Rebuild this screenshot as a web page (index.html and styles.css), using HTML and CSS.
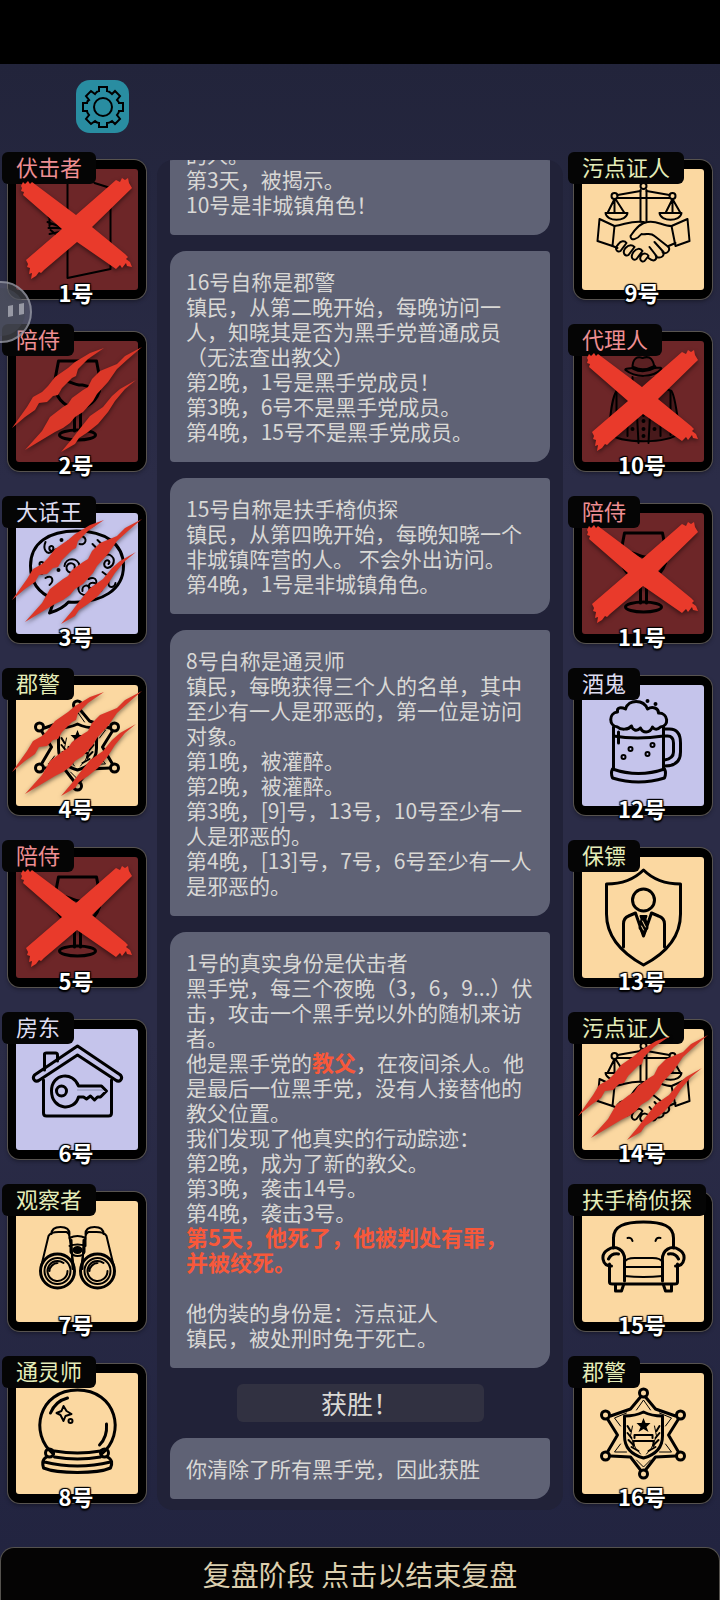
FILE: index.html
```html
<!DOCTYPE html>
<html lang="zh-CN">
<head>
    <meta charset="UTF-8">
    <meta name="viewport" content="width=device-width, initial-scale=1.0">
    <title>复盘阶段</title>
    <link rel="stylesheet" href="styles.css">
</head>
<body>
    <!-- shared role icons and status marks -->
    <svg class="sprites" width="0" height="0" aria-hidden="true">
        <defs>
            <g id="ambusher">
                <path d="M59 20V118L102 109V28L86 23"/>
                <path d="M40 57L52 61M39 62L50 66M40 68H54M41 74L51 72M41 57V66M42 70L52 78"/>
            </g>
            <g id="glass" stroke-width="3">
                <path d="M50 29H88L92 50C92 66 83 74 69 78C55 74 46 66 46 50Z"/>
                <path d="M48 48C57 45 64 54 74 53C81 54 86 58 91 59"/>
                <path d="M66 78V99M72 78V99"/>
                <ellipse cx="69" cy="103" rx="18" ry="5"/>
            </g>
            <g id="talk">
                <path stroke-width="3" d="M45 95C30 89 22 78 22 62C22 39 40 27 68 27C97 27 115 40 115 62C115 85 94 100 60 98C54 105 47 107 41 109C43 104 45 101 45 95Z"/>
                <path d="M37 38C34 45 38 51 43 48C47 44 44 40 41 43C40 47 44 49 48 45M56 62C57 53 70 53 71 62C71 71 57 71 58 63C60 57 68 59 66 64M70 81C68 92 80 94 81 86C81 79 73 81 74 87M80 75C88 71 91 80 84 84C78 85 80 77 86 79M94 53C101 47 108 54 104 61C99 67 93 62 97 57C100 55 102 58 100 60M73 32C80 34 77 42 71 40M37 74C44 70 46 77 41 81M100 78C99 85 106 84 107 79M60 37L64 42M84 40L87 43M94 68L98 71M45 86L49 85M89 36L93 40"/>
                <circle cx="33" cy="60" r="2"/><circle cx="53" cy="36" r="1"/><circle cx="50" cy="66" r="1"/><circle cx="84" cy="56" r="1"/><circle cx="61" cy="80" r="1"/><circle cx="92" cy="86" r="1"/><circle cx="33" cy="69" r="1"/>
            </g>
            <g id="sheriff">
                <path stroke-width="3" d="M71 33L81 45L101 52M104 55L94 71L104 88M101 92L81 93L71 106M66 106L56 93L36 92M33 88L43 71L33 55M36 52L56 45L66 33"/>
                <path stroke-width="1" d="M62 46L69 36L76 46M85 49L97 54L91 62M91 80L97 88L85 88M76 96L69 103L62 96M52 88L40 88L46 80M46 62L40 54L52 49"/>
                <g stroke-width="3">
                    <circle cx="69" cy="29" r="4"/><circle cx="106" cy="51" r="4"/><circle cx="106" cy="92" r="4"/><circle cx="69" cy="110" r="4"/><circle cx="31" cy="92" r="4"/><circle cx="31" cy="51" r="4"/>
                </g>
                <path stroke-width="3" d="M50 52Q61 52 69 48Q77 52 88 52V72C88 84 80 91 69 94C58 91 50 84 50 72Z"/>
                <path fill="#000" stroke="none" d="M69 54L71 59H76L72 63L74 68L69 65L64 68L66 63L62 59H67Z"/>
                <path d="M60 74V71H78V74M59 82V77H79V82"/>
                <path d="M53 62L56 67M53 69L57 74M54 76L59 81M57 83L64 87M85 62L82 67M85 69L81 74M84 76L79 81M81 83L74 87"/>
                <path stroke-width="1" d="M58 62L56 72L61 84L66 90M80 62L82 72L77 84L72 90"/>
            </g>
            <g id="house">
                <path stroke-width="3" d="M36 50V34Q36 33 38 33H47Q49 33 49 35V41"/>
                <path stroke-width="3" d="M69 26L112 55C115 59 111 63 107 60L69 35L31 60C27 63 23 59 26 55Z"/>
                <path stroke-width="3" d="M35 60V93Q35 96 38 96H100Q103 96 103 93V60"/>
                <path stroke-width="3" d="M70 66C65 51 43 53 43 71C43 90 66 92 70 77H75L78 79L82 76L86 80L89 77H92L98 71L93 66Z"/>
                <circle cx="53" cy="71" r="5" stroke-width="3"/>
                <path stroke-width="1" stroke="#8b90b4" d="M69 70H94"/>
            </g>
            <g id="binoculars">
                <circle cx="49" cy="79" r="17" stroke-width="3"/><circle cx="49" cy="79" r="13"/><path d="M55 71A10 10 0 1 0 59 79M49 71C45 71 41 75 41 79"/>
                <circle cx="89" cy="79" r="17" stroke-width="3"/><circle cx="89" cy="79" r="13"/><path d="M95 71A10 10 0 1 0 99 79M89 71C85 71 81 75 81 79"/>
                <path d="M33 73L40 44Q42 40 50 40H58Q61 41 61 45L65 73M105 73L98 44Q96 40 88 40H80Q77 41 77 45L73 73"/>
                <path d="M43 42Q43 35 52 35T61 42M77 42Q77 35 86 35T95 42"/>
                <path d="M61 46Q69 42 77 46V54Q69 51 61 54M62 54V60Q64 64 69 64Q75 64 76 60V54M63 48L64 77M75 48L74 77"/>
                <ellipse cx="69" cy="58" rx="4" ry="3" fill="#000"/>
            </g>
            <g id="crystal" stroke-width="3">
                <path d="M45 90C20 70 30 26 69 26C108 26 118 70 93 90"/>
                <path d="M46 87Q69 91 92 87M46 93Q69 97 92 93"/>
                <circle cx="41" cy="89" r="4"/><circle cx="96" cy="89" r="4"/>
                <path d="M38 93C33 96 34 100 35 104C50 110 88 110 102 104C104 99 104 96 99 93M36 98Q69 106 102 98"/>
                <path d="M42 49Q47 37 59 34M98 60Q99 73 91 81"/>
                <path stroke-width="2" d="M55 42L58 47L63 50L57 52L55 57L52 51L48 49L53 47Z"/>
                <circle cx="62" cy="57" r="2" stroke-width="2"/>
            </g>
            <g id="witness">
                <path d="M43 35L66 31M72 31L95 35M43 38H95"/>
                <circle cx="69" cy="26" r="3"/><circle cx="40" cy="36" r="3"/><circle cx="98" cy="36" r="3"/>
                <path d="M66 30V61M72 30V61"/>
                <path d="M40 39L33 53M40 39V53M41 39L50 53M31 53H53C52 62 32 62 31 53ZM98 39L91 53M98 39V53M98 39L106 53M85 53H107C106 62 86 62 85 53Z"/>
                <path d="M25 59L40 66L38 86L23 81ZM113 59L97 66L101 86L115 81Z"/>
                <path d="M40 66C50 65 57 60 69 62M97 66C88 66 82 60 73 62C65 63 60 70 56 76C56 82 63 79 67 74C72 75 76 72 80 76L94 87M101 83L94 86M38 86L43 88"/>
                <path d="M44 84C39 89 43 93 46 91L52 83C50 80 46 81 44 84ZM51 88C47 93 51 97 54 95L60 87C57 84 54 85 51 88ZM59 92C55 98 59 101 62 99L68 91C66 88 62 88 59 92ZM67 95C64 99 67 103 70 101L74 96C73 93 69 93 67 95Z"/>
                <path d="M74 98C80 103 83 99 81 95M82 97C87 99 91 95 88 92M89 93C93 94 96 90 94 87M75 87L82 96M80 82L89 92"/>
            </g>
            <g id="agent">
                <path fill="#5a2022" d="M58 36C58 26 63 24 68 26C76 23 79 28 80 36C84 36 87 35 87 37C78 46 61 46 51 38C50 36 54 37 58 36Z"/>
                <path stroke-width="4" d="M59 36Q69 41 80 35"/>
                <path fill="#48191b" d="M58 45V52Q69 60 80 52V45M55 53L42 59C37 66 36 84 34 101C46 112 92 112 105 101C103 84 101 65 97 59L82 53"/>
                <path d="M42 59V103M96 59V103M61 56L64 111M77 56L74 111M56 54L69 84L82 54M49 85H57M82 85H90M53 91V104M86 91V104"/>
                <circle cx="69" cy="89" r="1"/><circle cx="69" cy="97" r="1"/><circle cx="69" cy="104" r="1"/><circle cx="58" cy="97" r="1"/><circle cx="80" cy="97" r="1"/>
            </g>
            <g id="beer" stroke-width="3">
                <path d="M43 51C34 50 34 37 43 36C42 31 47 31 51 33C54 23 69 23 73 33C78 30 84 32 84 37C94 37 95 50 86 51C83 54 80 54 78 51C75 58 68 57 66 52C62 56 58 54 57 50C54 54 46 54 43 51Z"/>
                <path d="M39 51V93M89 51V93M39 60Q62 64 89 60"/>
                <path d="M38 93Q64 102 90 93M38 93Q36 97 38 102Q64 110 90 102Q92 97 90 93"/>
                <path d="M90 53H95C103 53 106 58 106 67V76C106 86 100 90 90 90M90 60H93C97 60 99 62 99 67V76C99 81 96 83 90 84"/>
                <path d="M44 56V67"/>
                <g stroke-width="2"><circle cx="56" cy="73" r="2"/><circle cx="49" cy="81" r="2"/><circle cx="78" cy="69" r="2"/><circle cx="73" cy="78" r="2"/></g>
                <g fill="#000" stroke-width="2"><circle cx="73" cy="25" r="1"/><circle cx="81" cy="28" r="1"/></g>
            </g>
            <g id="bodyguard" stroke-width="3">
                <path d="M69 22C58 33 46 36 32 36V66C32 90 49 106 69 117C90 106 106 90 106 66V36C92 36 80 33 69 22Z"/>
                <circle cx="69" cy="52" r="11"/>
                <path d="M49 99V76Q49 70 54 68L61 65L69 88L77 65L84 68Q90 70 90 76V99"/>
                <path stroke-width="2" fill="#000" d="M66 68H72L71 71L73 80L69 86L65 80L67 71Z"/>
                <path stroke="#fbd8a1" stroke-width="1" d="M68 73L71 79M67 78L69 82"/>
            </g>
            <g id="armchair" stroke-width="3">
                <path d="M39 56V46C39 34 50 30 69 30S99 34 99 46V56"/>
                <path d="M37 74C27 74 26 62 33 58C41 52 51 58 50 69V89M101 74C111 74 112 62 105 58C97 52 87 58 88 69V89"/>
                <path d="M35 72V90Q35 92 38 92H100Q103 92 103 90V72M34 67Q37 61 44 62M104 67Q101 61 94 62"/>
                <path stroke-width="2" d="M50 70Q52 66 60 66H78Q86 66 88 70M50 75H88M50 84Q69 86 88 84"/>
                <path d="M41 93V99H47L49 93M89 93L91 99H97V93"/>
                <path stroke-width="2" d="M53 46Q57 45 58 49M86 46Q82 45 81 49"/>
            </g>
            <path id="cross" fill="#e93a2b" d="M13 26L15 22L17 24L20 21L22 24L24 22L68 55L108 20L112 22L114 18L117 20L120 18L121 23L124 28L84 67L117 94L120 97L118 99L122 102L124 107L119 106L118 103L114 108L112 105L108 109L69 82L36 110L33 113L31 112L28 116L23 119L24 113L21 114L22 108L19 107L20 104L18 100L54 69L15 35L16 32L13 31L14 28Z"/>
            <path id="claws" fill="#db3728" d="M96 16L82 21L67 30L60 36L47 45L40 54L34 60L25 65L19 75L4 96L17 85L27 78L31 71L39 70L45 64L50 63L54 56L64 46L68 44L70 37L80 27ZM134 15L117 24L109 32L92 39L84 47L80 55L75 58L64 66L60 72L55 75L42 85L34 99L17 118L32 109L47 100L55 96L62 91L67 85L75 80L85 69L89 62L100 50L109 37L120 27ZM128 48L112 57L104 64L95 75L82 84L70 99L64 107L53 120L67 112L71 106L80 100L90 92L100 80L107 69L117 57Z"/>
        </defs>
    </svg>

    <div class="status-bar"></div>
    <header class="header">
        <button class="settings" type="button" aria-label="设置">
            <svg viewBox="0 0 44 44" aria-hidden="true">
                <path d="M18 2H26V6Q28 6 31 9L34 6L39 11L36 15Q38 17 38 18H42V26H38Q38 28 36 30L39 34L34 39L31 36Q28 38 26 38V42H18V38Q16 38 14 36L10 39L5 34L8 30Q6 28 6 26H2V18H6Q6 16 8 15L5 11L10 6L14 9Q16 6 18 6Z"/>
                <circle cx="22" cy="22" r="9"/>
            </svg>
        </button>
    </header>

    <main class="board">
        <section class="players">
            <div class="card mafia">
                <svg class="icon" viewBox="8 9 121 121"><use href="#ambusher"/></svg>
                <span class="role">伏击者</span>
                <svg class="mark" viewBox="0 0 138 139"><use href="#cross"/></svg>
                <span class="number">1号</span>
            </div>
            <div class="card mafia">
                <svg class="icon" viewBox="8 9 121 121"><use href="#glass"/></svg>
                <span class="role">陪侍</span>
                <svg class="mark" viewBox="0 0 138 139"><use href="#claws"/></svg>
                <span class="number">2号</span>
            </div>
            <div class="card outsider">
                <svg class="icon" viewBox="8 9 121 121"><use href="#talk"/></svg>
                <span class="role">大话王</span>
                <svg class="mark" viewBox="0 0 138 139"><use href="#claws"/></svg>
                <span class="number">3号</span>
            </div>
            <div class="card town">
                <svg class="icon" viewBox="8 9 121 121"><use href="#sheriff"/></svg>
                <span class="role">郡警</span>
                <svg class="mark" viewBox="0 0 138 139"><use href="#claws"/></svg>
                <span class="number">4号</span>
            </div>
            <div class="card mafia">
                <svg class="icon" viewBox="8 9 121 121"><use href="#glass"/></svg>
                <span class="role">陪侍</span>
                <svg class="mark" viewBox="0 0 138 139"><use href="#cross"/></svg>
                <span class="number">5号</span>
            </div>
            <div class="card outsider">
                <svg class="icon" viewBox="8 9 121 121"><use href="#house"/></svg>
                <span class="role">房东</span>
                <span class="number">6号</span>
            </div>
            <div class="card town">
                <svg class="icon" viewBox="8 9 121 121"><use href="#binoculars"/></svg>
                <span class="role">观察者</span>
                <span class="number">7号</span>
            </div>
            <div class="card town">
                <svg class="icon" viewBox="8 9 121 121"><use href="#crystal"/></svg>
                <span class="role">通灵师</span>
                <span class="number">8号</span>
            </div>
        </section>

        <section class="log">
            <p class="message">的人。<br>第3天，被揭示。<br>10号是非城镇角色！</p>
            <p class="message">16号自称是郡警<br>镇民，从第二晚开始，每晚访问一人，知晓其是否为黑手党普通成员（无法查出教父）<br>第2晚，1号是黑手党成员！<br>第3晚，6号不是黑手党成员。<br>第4晚，15号不是黑手党成员。</p>
            <p class="message">15号自称是扶手椅侦探<br>镇民，从第四晚开始，每晚知晓一个非城镇阵营的人。 不会外出访问。<br>第4晚，1号是非城镇角色。</p>
            <p class="message">8号自称是通灵师<br>镇民，每晚获得三个人的名单，其中至少有一人是邪恶的，第一位是访问对象。<br>第1晚，被灌醉。<br>第2晚，被灌醉。<br>第3晚，[9]号，13号，10号至少有一人是邪恶的。<br>第4晚，[13]号，7号，6号至少有一人是邪恶的。</p>
            <p class="message">1号的真实身份是伏击者<br>黑手党，每三个夜晚（3，6，9...）伏击，攻击一个黑手党以外的随机来访者。<br>他是黑手党的<strong>教父</strong>，在夜间杀人。他是最后一位黑手党，没有人接替他的教父位置。<br>我们发现了他真实的行动踪迹：<br>第2晚，成为了新的教父。<br>第3晚，袭击14号。<br>第4晚，袭击3号。<br><strong>第5天，他死了，他被判处有罪，<br>并被绞死。</strong><br><br>他伪装的身份是：污点证人<br>镇民，被处刑时免于死亡。</p>
            <h2 class="result">获胜！</h2>
            <p class="message">你清除了所有黑手党，因此获胜</p>
        </section>

        <section class="players">
            <div class="card town">
                <svg class="icon" viewBox="8 9 121 121"><use href="#witness"/></svg>
                <span class="role">污点证人</span>
                <span class="number">9号</span>
            </div>
            <div class="card mafia">
                <svg class="icon" viewBox="8 9 121 121"><use href="#agent"/></svg>
                <span class="role">代理人</span>
                <svg class="mark" viewBox="0 0 138 139"><use href="#cross"/></svg>
                <span class="number">10号</span>
            </div>
            <div class="card mafia">
                <svg class="icon" viewBox="8 9 121 121"><use href="#glass"/></svg>
                <span class="role">陪侍</span>
                <svg class="mark" viewBox="0 0 138 139"><use href="#cross"/></svg>
                <span class="number">11号</span>
            </div>
            <div class="card outsider">
                <svg class="icon" viewBox="8 9 121 121"><use href="#beer"/></svg>
                <span class="role">酒鬼</span>
                <span class="number">12号</span>
            </div>
            <div class="card town">
                <svg class="icon" viewBox="8 9 121 121"><use href="#bodyguard"/></svg>
                <span class="role">保镖</span>
                <span class="number">13号</span>
            </div>
            <div class="card town">
                <svg class="icon" viewBox="8 9 121 121"><use href="#witness"/></svg>
                <span class="role">污点证人</span>
                <svg class="mark" viewBox="0 0 138 139"><use href="#claws"/></svg>
                <span class="number">14号</span>
            </div>
            <div class="card town">
                <svg class="icon" viewBox="8 9 121 121"><use href="#armchair"/></svg>
                <span class="role">扶手椅侦探</span>
                <span class="number">15号</span>
            </div>
            <div class="card town">
                <svg class="icon" viewBox="8 9 121 121"><use href="#sheriff"/></svg>
                <span class="role">郡警</span>
                <span class="number">16号</span>
            </div>
        </section>
    </main>

    <button class="end-review" type="button">复盘阶段 点击以结束复盘</button>

    <button class="assist" type="button" aria-label="悬浮球">
        <svg viewBox="0 0 62 62" aria-hidden="true">
            <circle cx="31" cy="31" r="30" fill="#8b8d9b" fill-opacity="0.45" stroke="#9a9ca8" stroke-width="2"/>
            <circle cx="31" cy="31" r="24" fill="#50535f" fill-opacity="0.8"/>
            <path d="M38 25L43 24V35L38 36ZM49 23L54 22V33L49 34Z" fill="#b4b6bd"/>
        </svg>
    </button>
</body>
</html>
```

FILE: styles.css
```css
* {
    margin: 0;
    padding: 0;
    box-sizing: border-box;
}

body {
    position: relative;
    min-height: 100vh;
    display: flex;
    flex-direction: column;
    overflow-x: hidden;
    background: linear-gradient(#22243b 64px, #2b2c47 30%, #2b2c47 65%, #222440 97%);
    font-family: "Noto Sans CJK SC", sans-serif;
    color: #d9d8d5;
}

button {
    border: none;
    font-family: inherit;
    cursor: pointer;
}

.sprites {
    position: absolute;
}

.status-bar {
    height: 64px;
    background: #000;
}

.header {
    height: 96px;
    padding: 16px 76px;
}

.settings {
    display: flex;
    align-items: center;
    justify-content: center;
    width: 53px;
    height: 53px;
    border-radius: 14px;
    background: #298da1;
}

.settings svg {
    width: 44px;
    height: 44px;
    fill: none;
    stroke: #000;
    stroke-width: 2;
}

.board {
    display: grid;
    grid-template-columns: 138px 1fr 138px;
    gap: 11px;
    padding: 0 8px;
}

/* player cards */
.players {
    display: flex;
    flex-direction: column;
    gap: 33px;
    padding-bottom: 7px;
}

.card {
    position: relative;
    height: 139px;
    padding: 9px 8px;
    border-radius: 12px;
    background: #000;
    box-shadow: 0 0 0 1px #57534f, 0 2px 4px rgba(0, 0, 0, 0.4);
}

.icon {
    display: block;
    width: 100%;
    height: 100%;
    border-radius: 3px;
    fill: none;
    stroke: #000;
    stroke-width: 2;
    stroke-linecap: round;
    stroke-linejoin: round;
}

.mafia .icon {
    background: #6d2628;
}

.outsider .icon {
    background: #c5c4eb;
}

.town .icon {
    background: #fbd8a1;
}

.role {
    position: absolute;
    top: -8px;
    left: -6px;
    padding: 0 14px 4px;
    border-radius: 6px;
    background: #050505;
    font-size: 22px;
    line-height: 28px;
    white-space: nowrap;
}

.mafia .role {
    color: #ee8e92;
}

.outsider .role {
    color: #dedcf0;
}

.town .role {
    color: #e4ecb8;
}

.mark {
    position: absolute;
    inset: 0;
    overflow: visible;
    filter: drop-shadow(0 2px 2px rgba(0, 0, 0, 0.5));
}

.number {
    position: absolute;
    right: 2px;
    bottom: -6px;
    left: 0;
    color: #fff;
    font-size: 22px;
    font-weight: 700;
    line-height: 26px;
    text-align: center;
    text-shadow: 1px 1px 1px #000, -1px 1px 1px #000, 1px -1px 1px #000, -1px -1px 1px #000, 0 2px 2px #000;
}

/* message log, pinned to the newest entry */
.log {
    display: flex;
    flex-direction: column;
    justify-content: flex-end;
    gap: 16px;
    height: 0;
    min-height: 100%;
    padding: 0 13px 11px;
    overflow: hidden;
    border-radius: 16px;
    background: #212238;
}

.message {
    flex-shrink: 0;
    padding: 18px 16px;
    border-radius: 16px 4px;
    background: #5f6275;
    font-size: 21px;
    line-height: 25px;
}

.message strong {
    color: #f8583a;
    font-size: 22px;
    line-height: 22px;
}

.result {
    flex-shrink: 0;
    align-self: center;
    width: 65%;
    border-radius: 6px;
    background: #313141;
    font-size: 26px;
    font-weight: 400;
    line-height: 38px;
    text-align: center;
}

.end-review {
    flex: 1;
    min-height: 53px;
    margin-top: 37px;
    border: 1px solid #55524e;
    border-bottom: none;
    border-radius: 14px 14px 0 0;
    background: #050404;
    color: #dccfae;
    font-size: 28px;
    line-height: 40px;
}

/* floating assist ball docked at the left edge */
.assist {
    position: absolute;
    top: 281px;
    left: -30px;
    width: 62px;
    height: 62px;
    border-radius: 50%;
    background: none;
    opacity: 0.8;
}
```
